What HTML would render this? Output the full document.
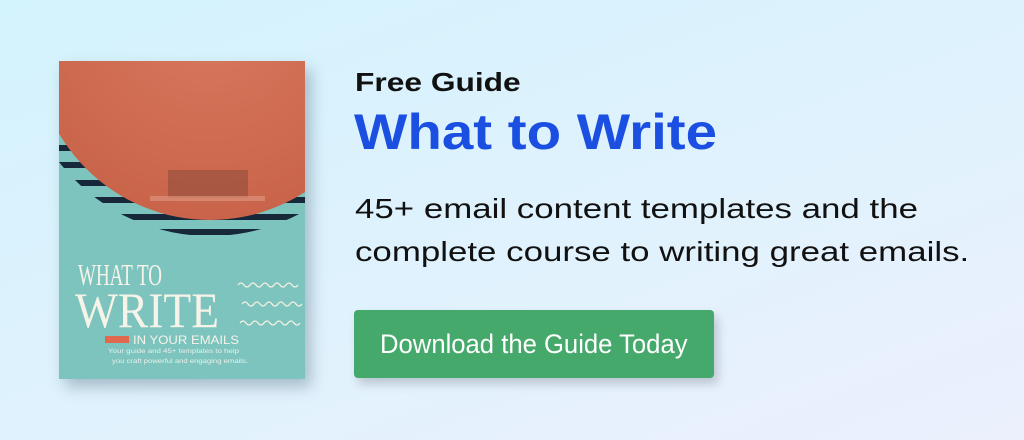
<!DOCTYPE html>
<html><head><meta charset="utf-8"><style>
body{margin:0;width:1024px;height:440px;overflow:hidden;font-family:"Liberation Sans",sans-serif;background:linear-gradient(160deg,#d3f3fd 0%,#e0f2fd 55%,#ecf0fd 100%);position:relative}
.cover{position:absolute;left:59px;top:61px;width:246px;height:318px;background:#7dc4bf;box-shadow:6px 8px 14px rgba(60,90,110,.35);overflow:hidden}
.t{position:absolute;color:#111;white-space:nowrap;transform-origin:left top}
.btn{position:absolute;left:354px;top:310px;width:360px;height:68px;background:#44a96a;border-radius:4px;box-shadow:4px 6px 10px rgba(0,0,0,.18)}
.btn span{position:absolute;left:26px;top:0;color:#fff;font-size:27px;line-height:68px;white-space:nowrap;transform:scaleX(.95);transform-origin:left center}
</style></head><body>
<div class="cover">
<svg width="246" height="318" viewBox="59 61 246 318" style="position:absolute;left:0;top:0">
<defs>
<clipPath id="big"><circle cx="210" cy="45" r="191"/></clipPath>
<radialGradient id="og" cx="50%" cy="40%" r="60%"><stop offset="0" stop-color="#d8795f"/><stop offset="1" stop-color="#c9644a"/></radialGradient>
</defs>
<g clip-path="url(#big)" fill="#17283a">
<rect x="40" y="128" width="300" height="6"/>
<rect x="40" y="145" width="300" height="6"/>
<rect x="40" y="162" width="300" height="6"/>
<rect x="40" y="180" width="300" height="6"/>
<rect x="40" y="197" width="300" height="6"/>
<rect x="40" y="214" width="300" height="6"/>
<rect x="40" y="229" width="300" height="6"/>
</g>
<circle cx="210" cy="45" r="175" fill="url(#og)"/>
<rect x="168" y="170" width="80" height="28" fill="#8a4a3a" opacity=".55"/>
<rect x="150" y="196" width="115" height="5" fill="#e09a82" opacity=".6"/>
<path d="M238 285 q3 -4 6 0 t6 0 t6 0 t6 0 t6 0 t6 0 t6 0 t6 0 t6 0 t6 0 M242 304 q3 -4 6 0 t6 0 t6 0 t6 0 t6 0 t6 0 t6 0 t6 0 t6 0 t6 0 M240 323 q3 -4 6 0 t6 0 t6 0 t6 0 t6 0 t6 0 t6 0 t6 0 t6 0 t6 0" stroke="#f3f0e0" stroke-width="1.3" fill="none"/>
<rect x="105" y="336" width="24" height="7" fill="#e0684d"/>
<text x="78" y="285" font-family="Liberation Serif" font-size="31" fill="#f6f3e8" textLength="84" lengthAdjust="spacingAndGlyphs">WHAT TO</text>
<text x="75" y="327" font-family="Liberation Serif" font-size="50" fill="#f6f3e8" textLength="144" lengthAdjust="spacingAndGlyphs">WRITE</text>
<text x="133" y="344" font-size="11.5" fill="#f6f3e8" textLength="106" lengthAdjust="spacingAndGlyphs">IN YOUR EMAILS</text>
<text x="108" y="353" font-size="6.5" fill="#e8f0ea" textLength="131" lengthAdjust="spacingAndGlyphs">Your guide and 45+ templates to help</text>
<text x="112" y="363" font-size="6.5" fill="#e8f0ea" textLength="136" lengthAdjust="spacingAndGlyphs">you craft powerful and engaging emails.</text>
</svg>
</div>
<div class="t" style="left:355px;top:67px;font-size:26px;font-weight:bold;transform:scaleX(1.22)">Free Guide</div>
<div class="t" style="left:354px;top:103px;font-size:50px;font-weight:bold;color:#1a4fe2;transform:scaleX(1.13)">What to Write</div>
<div class="t" style="left:355px;top:187px;font-size:28px;line-height:43px;transform:scaleX(1.245)">45+ email content templates and the<br>complete course to writing great emails.</div>
<div class="btn"><span>Download the Guide Today</span></div>
</body></html>
